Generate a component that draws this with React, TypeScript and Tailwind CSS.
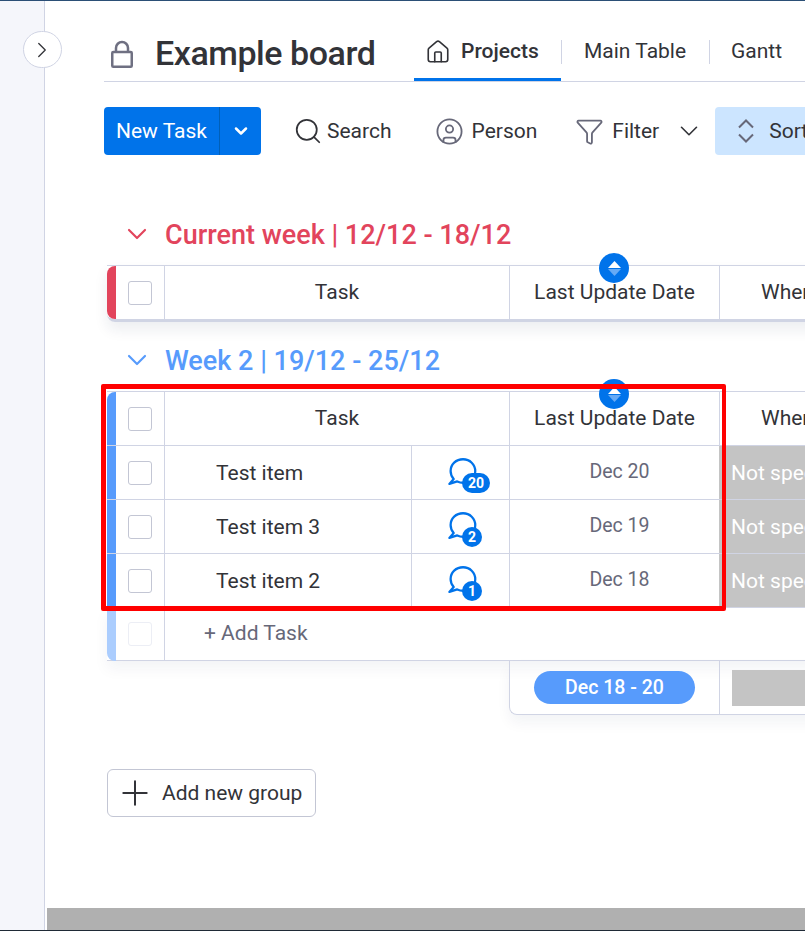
import React from 'react'
import { ChevronDown, ChevronRight, Filter, Home, Plus, Search, UserCircle } from 'lucide-react'

const line = 'border-[#d0d4e4]'

function Checkbox({ faded }: { faded?: boolean }) {
  return (
    <div className="flex w-[48px] shrink-0 items-center justify-center">
      <div className={`h-[24px] w-[24px] rounded-[3px] border ${faded ? 'border-[#eceef5]' : 'border-[#c3c6d4]'}`} />
    </div>
  )
}

function SortHandle() {
  return (
    <div className="absolute -top-[13px] left-[104px] flex h-[30px] w-[30px] -translate-x-1/2 flex-col items-center justify-center gap-[1px] rounded-full bg-[#0073ea]">
      <svg width="13" height="7" viewBox="0 0 13 7"><path d="M6.500 0 13 7H0Z" fill="#fff" /></svg>
      <svg width="13" height="7" viewBox="0 0 13 7"><path d="M6.500 7 13 0H0Z" fill="#66aaf5" /></svg>
    </div>
  )
}

function HeaderRow({ bar, rounded }: { bar: string; rounded: string }) {
  return (
    <div className={`flex h-[54px] w-[720px] border-t ${line}`}>
      <div className={`w-[9px] shrink-0 ${bar} ${rounded}`} />
      <Checkbox />
      <div className={`flex w-[345px] shrink-0 items-center justify-center border-l ${line} text-[21px] text-[#323338]`}>Task</div>
      <div className={`relative flex w-[210px] shrink-0 items-center justify-center border-l ${line} text-[21px] text-[#323338]`}>
        Last Update Date
        <SortHandle />
      </div>
      <div className={`flex flex-1 items-center border-l ${line} pl-[41px] text-[21px] text-[#323338]`}>When</div>
    </div>
  )
}

function Comments({ count }: { count: string }) {
  return (
    <div className="relative h-[34px] w-[46px]">
      <svg className="absolute left-0 top-[2px]" width="30" height="29" viewBox="0 0 28 28" fill="none">
        <path d="M15 1.200C8.200 1.200 3 6.200 3 12.600c0 3 1.100 5.600 3 7.600L1.800 25l7.600-2.400c1.700.8 3.600 1.300 5.600 1.300 6.600 0 11.800-5 11.800-11.300S21.600 1.200 15 1.200Z" stroke="#0073ea" strokeWidth="2.200" strokeLinejoin="round" />
      </svg>
      <span className="absolute left-[15px] top-[17px] flex h-[20px] min-w-[20px] items-center justify-center rounded-full bg-[#0073ea] px-[6px] text-[14px] font-bold leading-none text-white">{count}</span>
    </div>
  )
}

function ItemRow({ name, count, date }: { name: string; count: string; date: string }) {
  return (
    <div className={`flex h-[54px] w-[720px] border-t ${line}`}>
      <div className="w-[9px] shrink-0 bg-[#579bfc]" />
      <Checkbox />
      <div className={`flex w-[247px] shrink-0 items-center border-l ${line} pl-[51px] pt-[2px] text-[21px] text-[#323338]`}>{name}</div>
      <div className={`flex w-[98px] shrink-0 items-center border-l ${line} pl-[35px]`}>
        <Comments count={count} />
      </div>
      <div className={`flex w-[210px] shrink-0 items-center justify-center border-l ${line} pb-[1px] pl-[10px] text-[19.500px] text-[#676879]`}>{date}</div>
      <div className="flex flex-1 items-center whitespace-nowrap bg-[#c4c4c4] pl-[12px] pt-[2px] text-[21px] text-white">Not specified</div>
    </div>
  )
}

export default function App() {
  return (
    <div className="relative flex h-[931px] w-[805px] overflow-hidden border-y border-t-[#2b4f76] border-b-[#1f2a36] bg-white font-['Roboto',sans-serif]">
      {/* Side rail */}
      <div className={`w-[45px] shrink-0 border-r ${line} bg-[#f5f6fb]`} />
      <button className={`absolute left-[23px] top-[30px] flex h-[37px] w-[39px] items-center justify-center rounded-full border ${line} bg-white pr-[2px] text-[#323338]`}>
        <ChevronRight className="h-[26px] w-[26px]" strokeWidth={1.2} />
      </button>

      <div className="relative flex min-w-0 flex-1 flex-col">
        <div className="flex-1 pl-[59px]">
          {/* Title + tabs */}
          <div className={`flex h-[81px] items-end border-b ${line}`}>
            <div className="flex h-[80px] w-[310px] shrink-0 items-center pt-[25px]">
              <svg className="ml-[7px]" width="22" height="28" viewBox="0 0 22 28" fill="none" stroke="#6f7082" strokeWidth="2.500">
                <path d="M5 12V8a6 6 0 0 1 12 0v4" />
                <rect x="1.250" y="12" width="19.500" height="14.750" rx="1" />
              </svg>
              <h1 className="ml-[22px] text-[34px] font-medium tracking-[-0.45px] text-[#323338]">Example board</h1>
            </div>
            <div className="flex h-[52px] w-[147px] shrink-0 items-center gap-[10px] border-b-[3px] border-[#0073ea] pb-[3px] pl-[11px]">
              <Home className="h-[26px] w-[26px] text-[#323338]" strokeWidth={1.5} />
              <span className="text-[21px] font-medium text-[#323338]">Projects</span>
            </div>
            <div className="flex h-[52px] items-center pb-[6px] text-[21px] text-[#323338]">
              <div className={`h-[24px] border-l ${line}`} />
              <div className="w-[147px] pl-[22px]">Main Table</div>
              <div className={`h-[24px] border-l ${line}`} />
              <div className="pl-[21px]">Gantt</div>
            </div>
          </div>

          {/* Toolbar */}
          <div className="mt-[25px] flex h-[48px] w-[760px] items-center text-[21px] text-[#323338]">
            <div className="flex h-[48px] w-[157px] shrink-0 rounded-[4px] bg-[#0073ea] text-white">
              <div className="flex w-[116px] items-center justify-center border-r border-[#0060b9] pt-[1px]">New Task</div>
              <div className="flex flex-1 items-center justify-center"><ChevronDown className="h-[20px] w-[20px]" strokeWidth={3} /></div>
            </div>
            <Search className="ml-[32px] h-[30px] w-[30px] text-[#323338]" strokeWidth={1.4} />
            <span className="ml-[4px] pt-[2px]">Search</span>
            <UserCircle className="ml-[43px] h-[29px] w-[29px] text-[#676879]" strokeWidth={1.5} />
            <span className="ml-[8px] pt-[2px]">Person</span>
            <Filter className="ml-[38px] h-[29px] w-[29px] text-[#676879]" strokeWidth={1.5} />
            <span className="ml-[8px] pt-[2px]">Filter</span>
            <ChevronDown className="ml-[15px] h-[30px] w-[30px]" strokeWidth={1.3} />
            <div className="ml-[11px] flex h-[48px] w-[140px] items-center rounded-[4px] bg-[#cce5ff] pl-[22px]">
              <svg width="18" height="26" viewBox="0 0 18 26" fill="none" stroke="#676879" strokeWidth="2">
                <path d="M2 9.500 9 2.500l7 7M2 16.500l7 7 7-7" />
              </svg>
              <span className="ml-[14px] pt-[2px]">Sort</span>
            </div>
          </div>

          {/* Current week */}
          <div className="ml-[3px] mt-[64px]">
            <div className="flex h-[30px] items-center text-[#e2445c]">
              <ChevronDown className="ml-[14px] h-[32px] w-[32px]" strokeWidth={1.6} />
              <span className="ml-[12px] pt-[2px] text-[27px] font-medium">Current week | 12/12 - 18/12</span>
            </div>
            <div className="mt-[16px] w-[720px] rounded-bl-[8px] border-b-[3px] border-[#d0d4e4] shadow-[0_8px_14px_rgba(29,33,76,0.08)]">
              <HeaderRow bar="bg-[#e2445c]" rounded="rounded-l-[8px]" />
            </div>
          </div>

          {/* Week 2 */}
          <div className="ml-[3px] mt-[23px]">
            <div className="flex h-[30px] items-center text-[#579bfc]">
              <ChevronDown className="ml-[14px] h-[32px] w-[32px]" strokeWidth={1.6} />
              <span className="ml-[12px] pt-[2px] text-[27px] font-medium">Week 2 | 19/12 - 25/12</span>
            </div>
            <div className="mt-[16px] w-[720px]">
              <HeaderRow bar="bg-[#579bfc]" rounded="rounded-tl-[8px]" />
              <ItemRow name="Test item" count="20" date="Dec 20" />
              <ItemRow name="Test item 3" count="2" date="Dec 19" />
              <ItemRow name="Test item 2" count="1" date="Dec 18" />
              <div className={`flex h-[54px] border-y ${line} shadow-[0_8px_14px_rgba(29,33,76,0.05)]`}>
                <div className="-mb-[1px] w-[9px] shrink-0 rounded-bl-[8px] bg-[#abcdfe]" />
                <Checkbox faded />
                <div className={`flex flex-1 items-center border-l ${line} pl-[39px] text-[21px] text-[#676879]`}>+ Add Task</div>
              </div>
              <div className={`ml-[402px] flex h-[54px] rounded-bl-[8px] border-b border-l ${line} shadow-[0_8px_14px_rgba(29,33,76,0.05)]`}>
                <div className="flex w-[209px] shrink-0 items-center justify-center">
                  <div className="flex h-[33px] w-[161px] items-center justify-center rounded-full bg-[#579bfc] text-[19.500px] font-medium text-white">Dec 18 - 20</div>
                </div>
                <div className={`flex flex-1 items-center border-l ${line} pl-[12px]`}>
                  <div className="h-[36px] w-[200px] bg-[#c4c4c4]" />
                </div>
              </div>
            </div>
          </div>

          {/* Add group */}
          <button className="ml-[3px] mt-[54px] flex h-[48px] w-[209px] items-center rounded-[6px] border border-[#c3c6d4] text-[21px] text-[#323338]">
            <Plus className="ml-[7px] h-[40px] w-[40px]" strokeWidth={1.2} />
            <span className="ml-[7px] pt-[2px]">Add new group</span>
          </button>
        </div>

        <div className="ml-[2px] h-[22px] shrink-0 bg-[#b0b0b0]" />
      </div>

      {/* Red highlight */}
      <div className="pointer-events-none absolute left-[101px] top-[383px] h-[227px] w-[625px] rounded-[2px] border-[5px] border-r-[4px] border-[#ff0000]" />
    </div>
  )
}
